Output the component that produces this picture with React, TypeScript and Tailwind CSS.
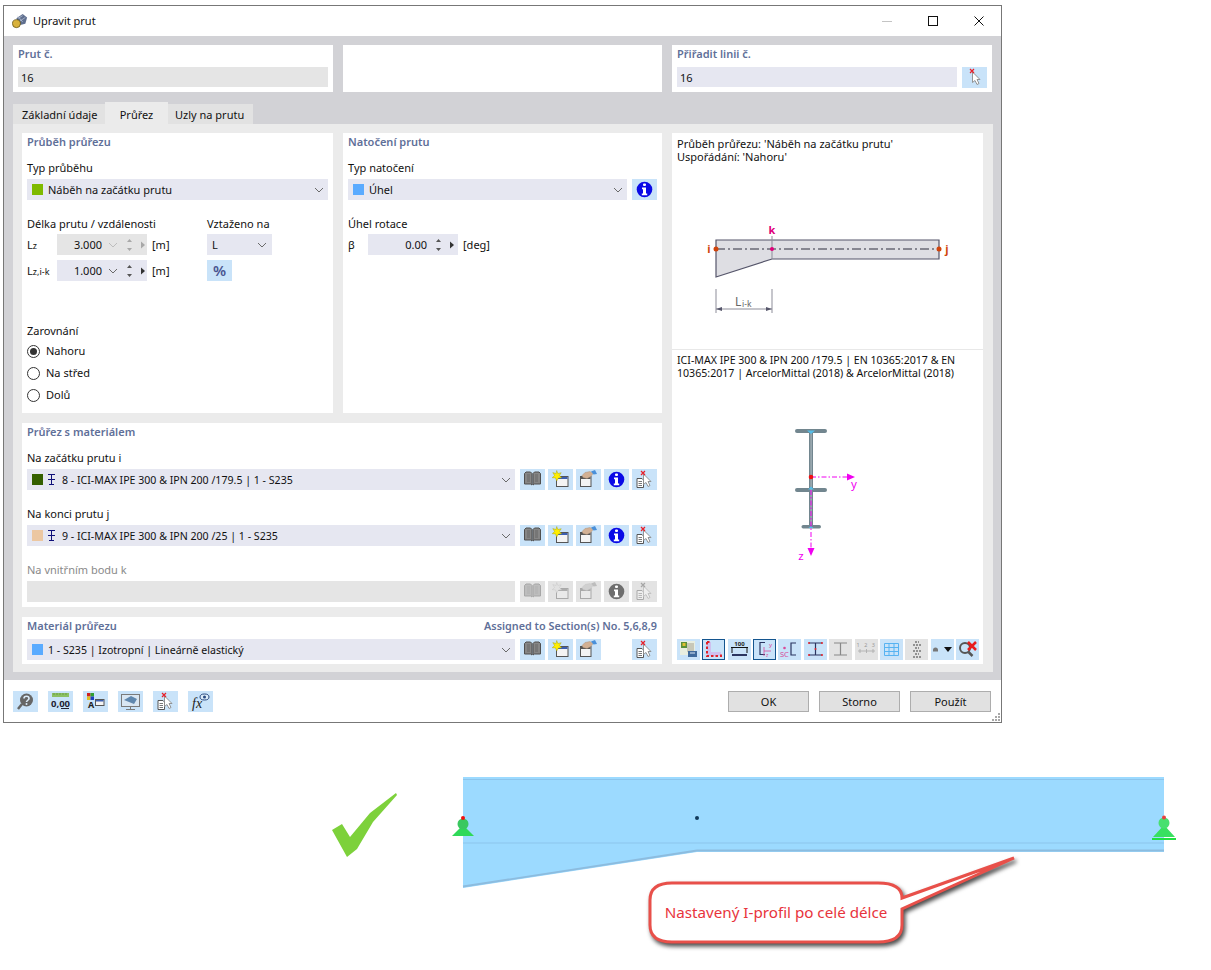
import type { ReactNode } from 'react';

const Chevron = ({ light }: { light?: boolean }) => (
  <svg width="10" height="6" viewBox="0 0 10 6" className="shrink-0">
    <path d="M1 1l4 4 4-4" fill="none" stroke={light ? '#bdbdbd' : '#6a6a6a'} strokeWidth="1" />
  </svg>
);

const Spin = ({ light }: { light?: boolean }) => (
  <svg width="22" height="16" viewBox="0 0 22 16" className="shrink-0">
    <g fill={light ? '#a8a8a8' : '#555'}>
      <path d="M3 5l2.500-3L8 5zM3 11l2.500 3L8 11z" />
      <path d="M17 4.500l4 3.500-4 3.500z" fill={light ? '#a8a8a8' : '#333'} />
    </g>
  </svg>
);

const IBeam = () => (
  <svg width="7" height="11" viewBox="0 0 7 11" className="shrink-0">
    <path d="M0 .5h7M0 5.500h7M1 10.500h5M3.500 0v11" stroke="#10107a" strokeWidth="1" fill="none" />
  </svg>
);

const Book = () => (
  <svg width="25" height="21" viewBox="0 0 25 21">
    <path d="M4.500 4.500l1.500-1.500h4.500l1.500 1.500V16l-1.500-1H4.500z" fill="#868686" stroke="#4f4f4f" />
    <path d="M20.500 4.500L19 3h-4.500L13 4.500V16l1.500-1h6z" fill="#868686" stroke="#4f4f4f" />
    <path d="M7 5h3v8H7zM15 5h3v8h-3z" fill="#767676" />
  </svg>
);

const NewWin = () => (
  <svg width="25" height="21" viewBox="0 0 25 21">
    <rect x="8.500" y="7.500" width="11.500" height="10" fill="#f4f4f4" stroke="#555" />
    <rect x="9" y="8" width="10.500" height="2" fill="#3c5fb0" />
    <path d="M8.700 1.500l1.200 3 3.300-.8-1.800 2.900 2.400 2.200-3.300.2-1.800 3-1.200-3.100-3.300-.2 2.400-2.100-1.800-3 3.300.9z" fill="#ffee00" stroke="#9a9400" strokeWidth=".4" />
  </svg>
);

const HandWin = () => (
  <svg width="25" height="21" viewBox="0 0 25 21">
    <rect x="4.500" y="7.500" width="10.500" height="10" fill="#f4f4f4" stroke="#555" />
    <rect x="5" y="8" width="9.500" height="2" fill="#555" />
    <path d="M6 6.500l3-3 5-1 3 2-2 3-4 2-4-1z" fill="#d2b094" stroke="#a58a72" strokeWidth=".4" />
    <path d="M15 2.500l4-1.500 2 4-3.500.5z" fill="#4a90d9" />
  </svg>
);

const Info = ({ gray }: { gray?: boolean }) => (
  <svg width="25" height="21" viewBox="0 0 25 21">
    <circle cx="12.500" cy="10.500" r="7.800" fill={gray ? '#6e6e6e' : '#0a0ae6'} />
    <rect x="11" y="4.500" width="3" height="2.600" rx="1" fill="#fff" />
    <path d="M10 8.500h4v6h1.200v1.800H9.800v-1.800H11V10.300h-1z" fill="#fff" />
  </svg>
);

const CursorDoc = () => (
  <svg width="25" height="21" viewBox="0 0 25 21">
    <path d="M5 9.500h5l1.500 1.500v7.500H5z" fill="#fff" stroke="#555" />
    <path d="M6.500 12.500h3.500M6.500 14.500h3.500M6.500 16.500h3.500" stroke="#555" strokeWidth=".8" />
    <path d="M11.500 5l7.500 7.500h-3l2 4-2 1-2-4-2.500 2z" fill="#fff" stroke="#8a8a8a" strokeWidth=".9" />
    <path d="M9 2l4 4M13 2l-4 4" stroke="#e8202a" strokeWidth="1.200" />
  </svg>
);

const CursorOnly = () => (
  <svg width="25" height="21" viewBox="0 0 25 21">
    <path d="M10.500 5l7.500 7.500h-3l2 4-2 1-2-4-2.500 2z" fill="#fff" stroke="#8a8a8a" strokeWidth=".9" />
    <path d="M8 2l4 4M12 2l-4 4" stroke="#e8202a" strokeWidth="1.200" />
  </svg>
);

const IconBtn = ({ children, gray, className }: { children?: ReactNode; gray?: boolean; className?: string }) => (
  <div className={`w-[25px] h-[21px] shrink-0 flex items-center justify-center ${gray ? 'bg-[#e3e3e3]' : 'bg-[#c9e3f9]'} ${className ?? ''}`}>
    {children}
  </div>
);

const Title = ({ children }: { children: ReactNode }) => (
  <div className="h-[18px] leading-[18px] font-semibold text-[#5f7099]">{children}</div>
);

const Label = ({ children, className }: { children: ReactNode; className?: string }) => (
  <div className={`h-[18px] leading-[18px] ${className ?? ''}`}>{children}</div>
);

const Select = ({ color, children, beam, gray, className }: { color?: string; children?: ReactNode; beam?: boolean; gray?: boolean; className?: string }) => (
  <div className={`h-[21px] flex items-center pl-[5px] pr-[4px] min-w-0 ${gray ? 'bg-[#e5e5e5]' : 'bg-[#e6e7f1]'} ${className ?? ''}`}>
    {color && <span className="w-[11px] h-[11px] shrink-0" style={{ backgroundColor: color }} />}
    {beam && <span className="ml-[5px] flex"><IBeam /></span>}
    <span className={`flex-1 whitespace-nowrap pt-[2px] ${beam ? 'ml-[7px]' : 'ml-[5px]'}`}>{children}</span>
    {!gray && <Chevron />}
  </div>
);

const SectionButtons = ({ noInfo, gray }: { noInfo?: boolean; gray?: boolean }) => (
  <div className="flex gap-[3px] shrink-0 ml-[5px]">
    <IconBtn gray={gray}><span className={gray ? 'opacity-40 flex' : 'flex'}><Book /></span></IconBtn>
    <IconBtn gray={gray}><span className={gray ? 'opacity-40 grayscale flex' : 'flex'}><NewWin /></span></IconBtn>
    <IconBtn gray={gray}><span className={gray ? 'opacity-40 grayscale flex' : 'flex'}><HandWin /></span></IconBtn>
    {noInfo ? <div className="w-[25px]" /> : <IconBtn gray={gray}><Info gray={gray} /></IconBtn>}
    <IconBtn gray={gray}><span className={gray ? 'opacity-40 grayscale flex' : 'flex'}><CursorDoc /></span></IconBtn>
  </div>
);

const Radio = ({ label, on }: { label: string; on?: boolean }) => (
  <div className="h-[22px] flex items-center">
    <span className="w-[13px] h-[13px] rounded-full border border-[#333] flex items-center justify-center bg-white">
      {on && <span className="w-[7px] h-[7px] rounded-full bg-[#333]" />}
    </span>
    <span className="ml-[6px]">{label}</span>
  </div>
);

const Num = ({ value, disabled, select }: { value: string; disabled?: boolean; select?: boolean }) => (
  <div className={`w-[90px] h-[21px] flex items-center justify-end ${select ? 'pr-[1px]' : 'pr-[3px]'} ${disabled ? 'bg-[#e5e5e5]' : 'bg-[#e6e7f1]'}`}>
    <span className="pt-[2px]">{value}</span>
    {select && <span className="ml-[6px] flex"><Chevron light={disabled} /></span>}
    <span className="ml-[6px] flex"><Spin light={disabled} /></span>
  </div>
);

const TbBtn = ({ children, gray, sel }: { children: ReactNode; gray?: boolean; sel?: boolean }) => (
  <div className={`w-[23px] h-[21px] flex items-center justify-center ${gray ? 'bg-[#e3e3e3]' : 'bg-[#c9e3f9]'} ${sel ? 'outline outline-1 -outline-offset-1 outline-[#14558f]' : ''}`}>
    <svg width="23" height="21" viewBox="0 0 23 21">{children}</svg>
  </div>
);

const Toolbar = () => (
  <div className="flex justify-between pl-[5px] pr-[4px] pb-[4px] mt-auto">
    <TbBtn>
      <rect x="3" y="2" width="15" height="14" fill="#e8eee0" />
      <rect x="4" y="3" width="6" height="6" fill="#5a8f3a" />
      <rect x="5.500" y="4" width="3" height="3" fill="#e0c030" />
      <rect x="10" y="4" width="7" height="9" fill="#c8c8b8" />
      <rect x="11" y="12" width="9" height="6" fill="#3f6a9c" />
      <path d="M13 14h5" stroke="#dbe7f5" />
    </TbBtn>
    <TbBtn sel>
      <path d="M5 3h4v10h10v4H5z" fill="#cfc0ee" />
      <path d="M5 3h4M5 3v14h14v-3" fill="none" stroke="#e0222a" strokeWidth="2" strokeDasharray="2.500 2" />
    </TbBtn>
    <TbBtn>
      <text x="11.500" y="7" fontSize="6" fontWeight="700" textAnchor="middle" fill="#222">100</text>
      <path d="M3 8.500h17M4 8v6M19 8v6" stroke="#111" strokeWidth="1" fill="none" />
      <rect x="4" y="15" width="15" height="2" fill="#2a3560" />
    </TbBtn>
    <TbBtn sel>
      <path d="M12 3.500H7v12h5" stroke="#2a3560" strokeWidth="1.200" fill="none" />
      <path d="M11 12h7M11 8v9" stroke="#d84a9a" strokeWidth=".8" />
      <text x="16" y="8" fontSize="6" fill="#d84a9a">y</text>
      <text x="13" y="18" fontSize="5" fill="#d84a9a">z</text>
    </TbBtn>
    <TbBtn>
      <path d="M18 4h-5v12h5" stroke="#2a3560" strokeWidth="1.200" fill="none" />
      <circle cx="6.500" cy="9" r="1.300" fill="#d84a9a" />
      <text x="2" y="18" fontSize="7.500" fill="#d84a9a">SC</text>
    </TbBtn>
    <TbBtn>
      <path d="M5 4h13M5 16h13M11.500 4v12" stroke="#2a3560" strokeWidth="1.200" />
      <g fill="#e0222a">
        <circle cx="5" cy="4" r="1" /><circle cx="18" cy="4" r="1" /><circle cx="5" cy="16" r="1" /><circle cx="18" cy="16" r="1" /><circle cx="11.500" cy="10" r="1" />
      </g>
    </TbBtn>
    <TbBtn gray>
      <path d="M5 4h13M5 16h13M11.500 4v12" stroke="#888" strokeWidth="1.200" />
    </TbBtn>
    <TbBtn gray>
      <text x="11.500" y="8" fontSize="5.500" textAnchor="middle" fill="#999" letterSpacing="1.500">1 2 3</text>
      <path d="M3 12h17M5 10v4M11.500 10v4M18 10v4" stroke="#aaa" strokeWidth=".8" />
    </TbBtn>
    <TbBtn>
      <path d="M4.500 4.500h14v12h-14zM4.500 8.500h14M4.500 12.500h14M9 4.500v12M14 4.500v12" stroke="#57b3f2" strokeWidth="1" fill="none" />
    </TbBtn>
    <TbBtn gray>
      <path d="M10 3h4M8 6h8M10 9h4M8 12h8M10 15h4M8 18h8" stroke="#777" strokeWidth="1.300" strokeDasharray="2 1" />
    </TbBtn>
    <TbBtn>
      <path d="M2 11a2.500 2.500 0 015 0v1.500H2z" fill="#777" />
      <path d="M13 8h8l-4 5z" fill="#111" />
    </TbBtn>
    <TbBtn>
      <circle cx="9" cy="9" r="5" fill="none" stroke="#555" strokeWidth="2" />
      <path d="M12.500 13l4 4" stroke="#555" strokeWidth="2.500" />
      <path d="M12 3l8 8M20 3l-8 8" stroke="#e81c1c" strokeWidth="2.500" />
    </TbBtn>
  </div>
);

const HaunchDiagram = () => (
  <svg width="260" height="100" viewBox="700 220 260 100" className="ml-[28px] mt-[57px] shrink-0">
    <path d="M716 240H939V259H772L716 277Z" fill="#dedee3" stroke="#55556a" strokeWidth="1.200" />
    <path d="M716 249H939" stroke="#2e2e3e" strokeWidth="1" strokeDasharray="9 3 2 3" />
    <path d="M772 236V259" stroke="#8d8d99" strokeWidth="1" />
    <circle cx="716" cy="249" r="2.500" fill="#d0440c" />
    <circle cx="939" cy="249" r="2.500" fill="#d0440c" />
    <circle cx="772" cy="249" r="2" fill="#e0007a" />
    <text x="772" y="234" fontSize="11" fontWeight="700" textAnchor="middle" fill="#e0007a">k</text>
    <text x="709" y="253" fontSize="11" fontWeight="700" textAnchor="middle" fill="#d0440c">i</text>
    <text x="947" y="253" fontSize="11" fontWeight="700" textAnchor="middle" fill="#d0440c">j</text>
    <path d="M716 289V313M772 289V313M716 309H772" stroke="#8d8d99" strokeWidth="1" />
    <path d="M716 309l6-2v4zM772 309l-6-2v4z" fill="#55556a" />
    <text x="735" y="306" fontSize="12" fill="#666">L</text>
    <text x="742" y="307" fontSize="8.500" fill="#666">i-k</text>
  </svg>
);

const SectionDiagram = () => (
  <svg width="90" height="145" viewBox="780 422 90 145" className="ml-[108px] mt-[42px] shrink-0">
    <g fill="#72868f">
      <rect x="795" y="429" width="32" height="4" rx="2" />
      <rect x="795" y="488" width="32" height="4" rx="2" />
      <rect x="801.500" y="525" width="19.500" height="3.500" rx="1.700" />
      <rect x="809" y="432" width="4" height="94" />
    </g>
    <rect x="810.500" y="433" width="1.200" height="92" fill="#a9b6bc" />
    <path d="M807 430.500h8l-4 3.500zM808 489.500l3-3 3 3zM808.500 528h5l-2.500-2z" fill="#55bde8" />
    <path d="M811 477H848" stroke="#f000f0" strokeWidth="1" strokeDasharray="5 2 1.500 2" />
    <path d="M811 490V552" stroke="#f000f0" strokeWidth="1" strokeDasharray="5 2 1.500 2" />
    <path d="M847 473.500l8 3.500-8 3.500zM807.500 548l3.500 8 3.500-8z" fill="#f000f0" />
    <circle cx="811" cy="477" r="2.300" fill="#f01010" />
    <text x="854" y="488" fontSize="11.500" textAnchor="middle" fill="#f000f0">y</text>
    <text x="801" y="560" fontSize="11.500" textAnchor="middle" fill="#f000f0">z</text>
  </svg>
);

const Beam = () => (
  <svg width="1211" height="247" viewBox="0 723 1211 247" className="block">
    <path d="M332 830l10-6 8 13 20-24 26-20 1 2-24 27-16 27-10 8z" fill="#7dd13b" />
    <path d="M463 777H1164V852H697L463 888Z" fill="#9cdaff" />
    <path d="M463 779.500H1164M463 843H1164" stroke="#8cc5ec" strokeWidth="1" />
    <path d="M697 850.500H1164M463 886.500L697 850.500" stroke="#8cbcdf" strokeWidth="1.800" />
    <circle cx="697" cy="818" r="2" fill="#123a5c" />
    <path d="M452 836l11-11 11 11z" fill="#2fd958" />
    <circle cx="463" cy="824" r="5.500" fill="#3ac860" />
    <circle cx="463" cy="818" r="2" fill="#f01010" />
    <path d="M1153 837l11-12 11 12z" fill="#38e060" />
    <circle cx="1164" cy="823" r="5.500" fill="#48e070" />
    <path d="M1152 839H1176" stroke="#20e040" strokeWidth="2" />
    <circle cx="1164" cy="817.500" r="2" fill="#e84040" />
    <path
      d="M672 883H878Q902 883 902 898L1014 858L902 909V925Q902 942 878 942H672Q650 942 650 925V900Q650 883 672 883Z"
      fill="#fff"
      stroke="#e8504a"
      strokeWidth="3"
      className="drop-shadow-[2px_3px_2px_rgba(0,0,0,0.7)]"
    />
  </svg>
);

export default function App() {
  return (
    <div className="relative w-[1211px] h-[970px] bg-white overflow-hidden font-['Noto_Sans',sans-serif] text-[11px] text-[#111]">
      <div className="pt-[5px] pl-[3px]">
        <div className="w-[999px] h-[718px] border border-[#777] flex flex-col bg-white">
          {/* title bar */}
          <div className="h-[30px] shrink-0 flex items-center pl-[8px]">
            <svg width="16" height="16" viewBox="0 0 18 18" className="shrink-0">
              <path d="M5 6l7-5 5 4-2 7-8 2z" fill="#5f6f8f" />
              <path d="M7 6l5-3M9 9l6-4M6 3l6 7" stroke="#c8d2e2" strokeWidth=".7" />
              <circle cx="5" cy="12" r="4.500" fill="#d9b23c" stroke="#5a4a10" strokeWidth=".8" />
            </svg>
            <span className="ml-[5px]">Upravit prut</span>
            <svg width="102" height="12" viewBox="0 0 102 12" className="ml-auto mr-[17px]">
              <path d="M0 6.500h10" stroke="#c4c4c4" />
              <rect x="46.500" y="1.500" width="9" height="9" fill="none" stroke="#111" />
              <path d="M92.500 1.500l9 9M101.500 1.500l-9 9" stroke="#111" />
            </svg>
          </div>

          {/* dialog body */}
          <div className="h-[644px] shrink-0 bg-[#d2d2d6] px-[9px] pt-[9px] pr-[8px]">
            <div className="flex gap-[10px]">
              <div className="w-[320px] h-[47px] bg-white px-[5px]">
                <Title>Prut č.</Title>
                <div className="mt-[4px] h-[20px] leading-[22px] bg-[#e5e5e5] pl-[3px]">16</div>
              </div>
              <div className="w-[319px] h-[47px] bg-white" />
              <div className="w-[320px] h-[47px] bg-white px-[5px]">
                <Title>Přiřadit linii č.</Title>
                <div className="mt-[4px] flex gap-[5px]">
                  <div className="flex-1 h-[20px] leading-[22px] bg-[#e6e7f1] pl-[3px]">16</div>
                  <IconBtn><CursorOnly /></IconBtn>
                </div>
              </div>
            </div>

            {/* tabs */}
            <div className="mt-[10px] h-[22px] flex items-end">
              <div className="w-[92px] h-[20px] leading-[22px] bg-[#e2e2e2] pl-[9px]">Základní údaje</div>
              <div className="w-[63px] h-[22px] leading-[26px] bg-[#ebebeb] text-center">Průřez</div>
              <div className="w-[85px] h-[20px] leading-[22px] bg-[#e2e2e2] pl-[7px]">Uzly na prutu</div>
            </div>

            <div className="h-[548px] bg-[#ebebeb] p-[9px] pb-[8px] flex gap-[10px]">
              <div className="w-[640px] flex flex-col gap-[10px]">
                <div className="flex gap-[10px] h-[280px]">
                  <section className="w-[311px] bg-white px-[5px]">
                    <Title>Průběh průřezu</Title>
                    <Label className="mt-[8px]">Typ průběhu</Label>
                    <Select color="#7fba00" className="mt-[2px]">Náběh na začátku prutu</Select>
                    <div className="flex mt-[15px]">
                      <Label className="w-[180px]">Délka prutu / vzdálenosti</Label>
                      <Label>Vztaženo na</Label>
                    </div>
                    <div className="flex mt-[1px] items-center">
                      <span className="w-[30px] pt-[2px]">L<span className="text-[9px]">z</span></span>
                      <Num value="3.000" disabled select />
                      <span className="w-[60px] pl-[5px] pt-[2px]">[m]</span>
                      <div className="w-[65px] h-[21px] bg-[#e6e7f1] flex items-center justify-between pl-[5px] pr-[5px]">
                        <span className="pt-[2px]">L</span><Chevron />
                      </div>
                    </div>
                    <div className="flex mt-[5px] items-center">
                      <span className="w-[30px] pt-[2px]">L<span className="text-[9px]">z,i-k</span></span>
                      <Num value="1.000" select />
                      <span className="w-[60px] pl-[5px] pt-[2px]">[m]</span>
                      <IconBtn><span className="text-[15px] font-semibold text-[#4a5590]">%</span></IconBtn>
                    </div>
                    <Label className="mt-[41px]">Zarovnání</Label>
                    <Radio label="Nahoru" on />
                    <Radio label="Na střed" />
                    <Radio label="Dolů" />
                  </section>

                  <section className="w-[319px] bg-white px-[5px]">
                    <Title>Natočení prutu</Title>
                    <Label className="mt-[8px]">Typ natočení</Label>
                    <div className="mt-[2px] flex gap-[5px]">
                      <Select color="#5aabff" className="flex-1">Úhel</Select>
                      <IconBtn><Info /></IconBtn>
                    </div>
                    <Label className="mt-[15px]">Úhel rotace</Label>
                    <div className="flex items-center mt-[1px]">
                      <span className="w-[20px] pt-[2px]">β</span>
                      <Num value="0.00" />
                      <span className="pl-[5px] pt-[2px]">[deg]</span>
                    </div>
                  </section>
                </div>

                <section className="h-[184px] bg-white px-[5px]">
                  <Title>Průřez s materiálem</Title>
                  <Label className="mt-[8px]">Na začátku prutu i</Label>
                  <div className="mt-[2px] flex">
                    <Select color="#356000" beam className="flex-1 text-[10.600px]">8 - ICI-MAX IPE 300 &amp; IPN 200 /179.5 | 1 - S235</Select>
                    <SectionButtons />
                  </div>
                  <Label className="mt-[15px]">Na konci prutu j</Label>
                  <div className="mt-[2px] flex">
                    <Select color="#ecc7a1" beam className="flex-1 text-[10.600px]">9 - ICI-MAX IPE 300 &amp; IPN 200 /25 | 1 - S235</Select>
                    <SectionButtons />
                  </div>
                  <Label className="mt-[15px] text-[#8a8a8a]">Na vnitřním bodu k</Label>
                  <div className="mt-[2px] flex">
                    <Select gray className="flex-1" />
                    <SectionButtons gray />
                  </div>
                </section>

                <section className="h-[47px] bg-white px-[5px]">
                  <div className="flex justify-between">
                    <Title>Materiál průřezu</Title>
                    <Title><span className="text-[10.800px]">Assigned to Section(s) No. 5,6,8,9</span></Title>
                  </div>
                  <div className="mt-[4px] flex">
                    <Select color="#5aabff" className="flex-1 text-[10.600px]">1 - S235 | Izotropní | Lineárně elastický</Select>
                    <SectionButtons noInfo />
                  </div>
                </section>
              </div>

              {/* preview column */}
              <div className="w-[311px] bg-white flex flex-col">
                <div className="h-[217px] border-b border-[#e8e8e8] flex flex-col shrink-0">
                  <div className="pl-[5px] pt-[4px] leading-[13px]">
                    <p>Průběh průřezu: 'Náběh na začátku prutu'</p>
                    <p>Uspořádání: 'Nahoru'</p>
                  </div>
                  <HaunchDiagram />
                </div>
                <div className="flex-1 flex flex-col min-h-0">
                  <div className="pl-[5px] pt-[4px] pr-[5px] leading-[13px] text-[10.600px]">
                    <p>ICI-MAX IPE 300 &amp; IPN 200 /179.5 | EN 10365:2017 &amp; EN</p>
                    <p>10365:2017 | ArcelorMittal (2018) &amp; ArcelorMittal (2018)</p>
                  </div>
                  <SectionDiagram />
                  <Toolbar />
                </div>
              </div>
            </div>
          </div>

          {/* footer */}
          <div className="relative flex-1 flex items-center pl-[9px] pr-[9px]">
            <div className="flex gap-[10px]">
              <IconBtn>
                <svg width="25" height="21" viewBox="0 0 25 21">
                  <circle cx="13.500" cy="9" r="6.500" fill="#666" />
                  <path d="M9 13l-4 5" stroke="#666" strokeWidth="2.500" />
                  <path d="M11 7.500c0-3 5-3 5 0 0 1.500-2.500 2-2.500 3.500" fill="none" stroke="#dcecf9" strokeWidth="1.600" />
                  <circle cx="13.500" cy="13" r="1" fill="#dcecf9" />
                </svg>
              </IconBtn>
              <IconBtn>
                <svg width="25" height="21" viewBox="0 0 25 21">
                  <rect x="4" y="2" width="17" height="4" fill="#8cc063" />
                  <path d="M6 2v2M9 2v2M12 2v2M15 2v2M18 2v2" stroke="#5d8f3a" strokeWidth=".7" />
                  <text x="12.500" y="16" fontSize="9.500" fontWeight="700" textAnchor="middle" fill="#223">0,00</text>
                  <path d="M13 17.500h8" stroke="#223" />
                </svg>
              </IconBtn>
              <IconBtn>
                <svg width="25" height="21" viewBox="0 0 25 21">
                  <rect x="4" y="2" width="3.500" height="3.500" fill="#d02020" />
                  <rect x="7.500" y="2" width="3.500" height="3.500" fill="#30a030" />
                  <rect x="4" y="5.500" width="3.500" height="3.500" fill="#e0c020" />
                  <rect x="7.500" y="5.500" width="3.500" height="3.500" fill="#2040c0" />
                  <text x="8" y="17" fontSize="9" fontWeight="700" textAnchor="middle" fill="#222">A</text>
                  <rect x="12.500" y="8.500" width="8.500" height="6" fill="#f4f4f4" stroke="#555" />
                  <rect x="13" y="9" width="7.500" height="1.500" fill="#3c5fb0" />
                </svg>
              </IconBtn>
              <IconBtn>
                <svg width="25" height="21" viewBox="0 0 25 21">
                  <rect x="3.500" y="3.500" width="18" height="12" fill="#d9e6f2" stroke="#7a7a7a" />
                  <path d="M6 9l7-4 6 3-3 5z" fill="#5f87ae" />
                  <path d="M12.500 15.500v2.500M8 18.500h9" stroke="#7a7a7a" />
                </svg>
              </IconBtn>
              <IconBtn><CursorDoc /></IconBtn>
              <IconBtn>
                <svg width="25" height="21" viewBox="0 0 25 21">
                  <text x="4" y="17" fontSize="14" fontStyle="italic" fontFamily="'Liberation Serif',serif" fill="#222">fx</text>
                  <ellipse cx="16.500" cy="6" rx="4.500" ry="3" fill="#dcecf9" stroke="#2a4a80" />
                  <circle cx="16.500" cy="6" r="1.500" fill="#2a4a80" />
                </svg>
              </IconBtn>
            </div>
            <div className="ml-auto mr-[1px] flex gap-[10px]">
              <div className="w-[81px] h-[21px] leading-[19px] border border-[#adadad] bg-[#e1e1e1] text-center">OK</div>
              <div className="w-[81px] h-[21px] leading-[19px] border border-[#adadad] bg-[#e1e1e1] text-center">Storno</div>
              <div className="w-[81px] h-[21px] leading-[19px] border border-[#adadad] bg-[#e1e1e1] text-center">Použít</div>
            </div>
            <svg width="10" height="10" viewBox="0 0 10 10" className="absolute right-0 bottom-0">
              <path d="M7 1h2v2H7zM4 4h2v2H4zM7 4h2v2H7zM1 7h2v2H1zM4 7h2v2H4zM7 7h2v2H7z" fill="#a8a8a8" />
            </svg>
          </div>
        </div>
      </div>

      {/* beam drawing under the dialog */}
      <div className="relative">
        <Beam />
        <div className="absolute left-[650px] top-[160px] w-[252px] h-[59px] flex items-center justify-center text-[#e8343c] text-[15.200px]">
          Nastavený I-profil po celé délce
        </div>
      </div>
    </div>
  );
}
